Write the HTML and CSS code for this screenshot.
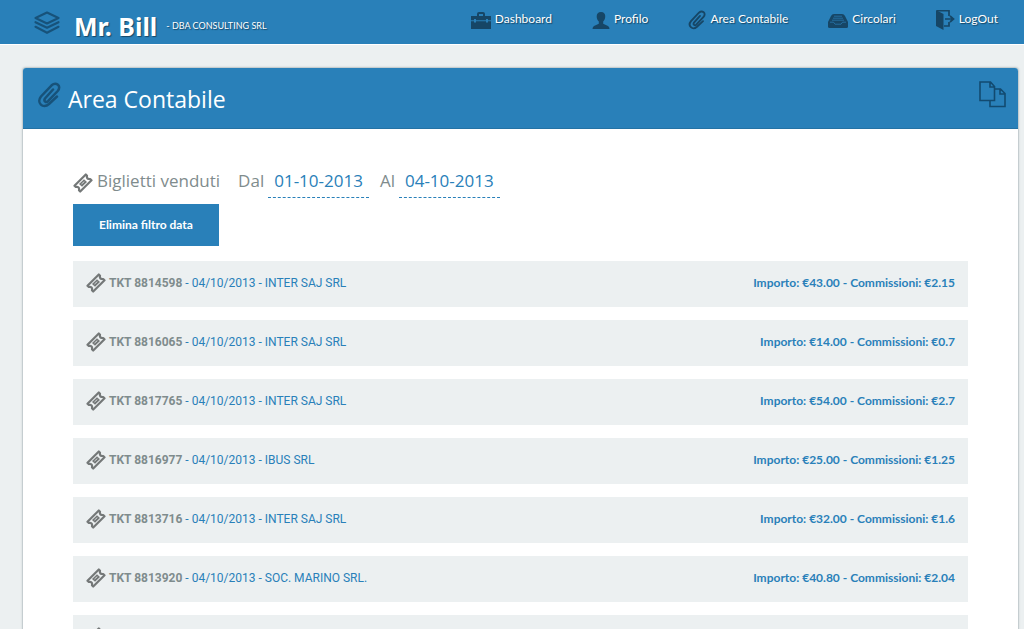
FILE: index.html
```html
<!DOCTYPE html>
<html lang="it">
<head>
<meta charset="utf-8">
<title>Mr. Bill - Area Contabile</title>
<link rel="stylesheet" href="styles.css">
</head>
<body>
<svg class="sprite" aria-hidden="true">
  <symbol id="ticket" viewBox="0 0 20 20">
    <path d="M1.500 12.800 12.800 1.500 14 2.800 Q13.200 6.300 17.200 6 L18.500 7.200 7.200 18.500 6 17.200 Q6.700 13.500 2.800 14Z" fill="none" stroke="currentColor" stroke-width="2.200" stroke-linejoin="round"/>
    <path d="M6 11 11 6.200 14 9 9 13.800Z" fill="currentColor"/>
    <path d="M8.500 11 11.300 8.600" fill="none" stroke="#ecf0f1" stroke-width=".8"/>
  </symbol>
  <symbol id="clip" viewBox="0 0 24 26">
    <path d="M16 7.500 8 16.500C6.300 19 9 21.200 11 19.200L20.700 9C25 3.800 19-.5 14.600 3.300L4 14.500C-1 20.700 6 27.300 12 22L20 14.500" fill="none" stroke="currentColor" stroke-width="2.500" stroke-linecap="round"/>
  </symbol>
</svg>
<header class="topbar">
  <svg class="layers" viewBox="0 0 26 24" aria-hidden="true">
    <g fill="none" stroke="currentColor" stroke-width="2.200" stroke-linejoin="round" stroke-linecap="round">
      <path d="M13 1.500 24.500 7 13 12.500 1.500 7Z"/>
      <path d="M1.500 11.200 13 16.700 24.500 11.200"/>
      <path d="M1.500 15.800 13 21.800 24.500 15.800"/>
    </g>
  </svg>
  <a class="brand" href="#">Mr. Bill</a>
  <span class="company">- DBA CONSULTING SRL</span>
  <nav class="menu">
    <a href="#"><svg viewBox="0 0 20 17" aria-hidden="true"><path d="M0 4h6V2q0-2 2-2h4q2 0 2 2v2h6v4.200h-3V7h-2v1.200H5V7H3v1.200H0ZM8 4h4V2H8ZM0 9.200h3v1.300h2V9.200h10v1.300h2V9.200h3V17H0Z" fill="currentColor" fill-rule="evenodd"/></svg>Dashboard</a>
    <a href="#"><svg class="narrow" viewBox="0 0 17 17" aria-hidden="true"><path d="M8.500 0C14.500 0 13.200 7.700 10.700 9.500V11.800L15.500 14Q17 14.800 17 17H0Q0 14.800 1.500 14L6.300 11.800V9.500C3.800 7.700 2.500 0 8.500 0Z" fill="currentColor"/></svg>Profilo</a>
    <a href="#"><svg class="narrow tall"><use href="#clip"/></svg>Area Contabile</a>
    <a href="#"><svg viewBox="0 0 20 15" aria-hidden="true"><path d="M6 1h8q2 0 3 2L20 9v4.500q0 1.500-1.500 1.500h-17Q0 15 0 13.500V9L3 3Q4 1 6 1Z" fill="currentColor"/><path d="M6 3.200h8M5 5.200h10M4 7.200h12M2 9.200h3.500l1.500 2h6l1.500-2H18" fill="none" stroke="#2980b9" stroke-width=".7"/></svg>Circolari</a>
    <a href="#"><svg class="door tall" viewBox="0 0 19 20" aria-hidden="true"><path d="M0 0 7.500 4V20L0 16Z" fill="currentColor"/><path d="M1 .7H13V6M13 12v4H8M9 9h8M14 6l3.500 3L14 12" fill="none" stroke="currentColor" stroke-width="1.700"/></svg>LogOut</a>
  </nav>
</header>
<main class="card">
  <div class="card-head">
    <svg class="head-clip" aria-hidden="true"><use href="#clip"/></svg>
    <h1>Area Contabile</h1>
    <button class="copy" type="button" aria-label="Copia">
      <svg viewBox="0 0 27 27" aria-hidden="true"><g fill="none" stroke="currentColor" stroke-width="1.600"><path d="M11 19.500H1V1h10.500l4 4.500v14H11V25.500H26V12.500L21.500 8H15.500M11 1v5h4.500M21 8v5h5"/></g></svg>
    </button>
  </div>
  <div class="content">
    <h2 class="filter"><svg class="ticket"><use href="#ticket"/></svg><span class="sold">Biglietti venduti</span><span>Dal</span><a class="date" href="#">01-10-2013</a><span>Al</span><a class="date" href="#">04-10-2013</a></h2>
    <button class="clear" type="button">Elimina filtro data</button>
    <ul class="rows">
      <li><svg class="ticket"><use href="#ticket"/></svg><a href="#"><b>TKT 8814598</b> - 04/10/2013 - INTER SAJ SRL</a><strong>Importo: €43.00 - Commissioni: €2.15</strong></li>
      <li><svg class="ticket"><use href="#ticket"/></svg><a href="#"><b>TKT 8816065</b> - 04/10/2013 - INTER SAJ SRL</a><strong>Importo: €14.00 - Commissioni: €0.7</strong></li>
      <li><svg class="ticket"><use href="#ticket"/></svg><a href="#"><b>TKT 8817765</b> - 04/10/2013 - INTER SAJ SRL</a><strong>Importo: €54.00 - Commissioni: €2.7</strong></li>
      <li><svg class="ticket"><use href="#ticket"/></svg><a href="#"><b>TKT 8816977</b> - 04/10/2013 - IBUS SRL</a><strong>Importo: €25.00 - Commissioni: €1.25</strong></li>
      <li><svg class="ticket"><use href="#ticket"/></svg><a href="#"><b>TKT 8813716</b> - 04/10/2013 - INTER SAJ SRL</a><strong>Importo: €32.00 - Commissioni: €1.6</strong></li>
      <li><svg class="ticket"><use href="#ticket"/></svg><a href="#"><b>TKT 8813920</b> - 04/10/2013 - SOC. MARINO SRL.</a><strong>Importo: €40.80 - Commissioni: €2.04</strong></li>
      <li><svg class="ticket"><use href="#ticket"/></svg></li>
    </ul>
  </div>
</main>
</body>
</html>
```
FILE: styles.css
```css
* { box-sizing: border-box; }
body {
  margin: 0;
  height: 100vh;
  overflow: hidden;
  background: #ecf0f1;
  color: #7f8c8d;
  font: 12px/20px Lato, "Open Sans", sans-serif;
}
a { color: inherit; text-decoration: none; }
button { border: 0; font: inherit; cursor: pointer; }
.sprite { position: absolute; width: 0; height: 0; }

.topbar {
  display: flex;
  align-items: flex-start;
  height: 45px;
  padding: 0 26px 0 34px;
  background: #2980b9;
  border-bottom: 1px solid #fff;
  color: #fff;
  text-shadow: 1px 1px 1px #164666;
  white-space: nowrap;
}
.layers { width: 26px; height: 24px; margin-top: 11px; color: #17527a; }
.brand { margin: 8px 0 0 14px; font: bold 25px/36px "Noto Sans", sans-serif; }
.company { margin: 16px 0 0 9px; font-size: 9px; }
.menu { display: flex; gap: 40px; margin: 9px 0 0 auto; }
.menu a { display: flex; align-items: flex-start; gap: 4px; }
.menu svg { width: 20px; height: 17px; margin-top: 3px; color: #164666; }
.menu .narrow { width: 18px; }
.menu .tall { height: 20px; margin-top: 1px; }
.menu .door { width: 19px; }

.card {
  margin: 22px 5px 0 22px;
  border: 1px solid #c5cdd0;
  border-radius: 4px;
  background: #fff;
  box-shadow: 0 0 2px #c5cdd0;
}
.card-head {
  display: flex;
  align-items: flex-start;
  height: 61px;
  padding: 0 12px 0 14px;
  border-bottom: 1px solid #2472a4;
  border-radius: 3px 3px 0 0;
  background: #2980b9;
  color: #fff;
}
.head-clip { width: 24px; height: 28px; margin-top: 13px; color: #17527a; }
h1 { margin: 15px 0 0 7px; font: 23px/32px "Open Sans", sans-serif; }
.copy { margin: 13px 0 0 auto; padding: 0; background: none; color: #124a70; }
.copy svg { display: block; width: 27px; height: 27px; }

.content { padding: 36px 50px 0; }
.filter {
  display: flex;
  align-items: flex-start;
  margin: 0;
  font: 17px/32px "Open Sans", sans-serif;
}
.ticket { flex: none; width: 20px; height: 20px; color: #747878; }
.filter .ticket { margin: 8px 4px 0 0; }
.sold { margin-right: 18px; }
.date {
  height: 33px;
  margin: 0 11px 0 4px;
  padding: 0 6px;
  border-bottom: 1px dashed #2980b9;
  color: #2980b9;
}
.clear {
  display: block;
  margin-top: 6px;
  padding: 11px 26px;
  background: #2980b9;
  color: #fff;
  font-weight: bold;
}
.rows { display: grid; gap: 13px; margin: 15px 0 0; padding: 0; list-style: none; }
.rows li {
  display: flex;
  align-items: flex-start;
  height: 46px;
  padding: 12px 13px;
  background: #ecf0f1;
  color: #2980b9;
}
.rows a { margin-left: 3px; font-family: Roboto, Lato, sans-serif; }
.rows b { color: #7f8c8d; }
.rows strong { margin-left: auto; }
```
